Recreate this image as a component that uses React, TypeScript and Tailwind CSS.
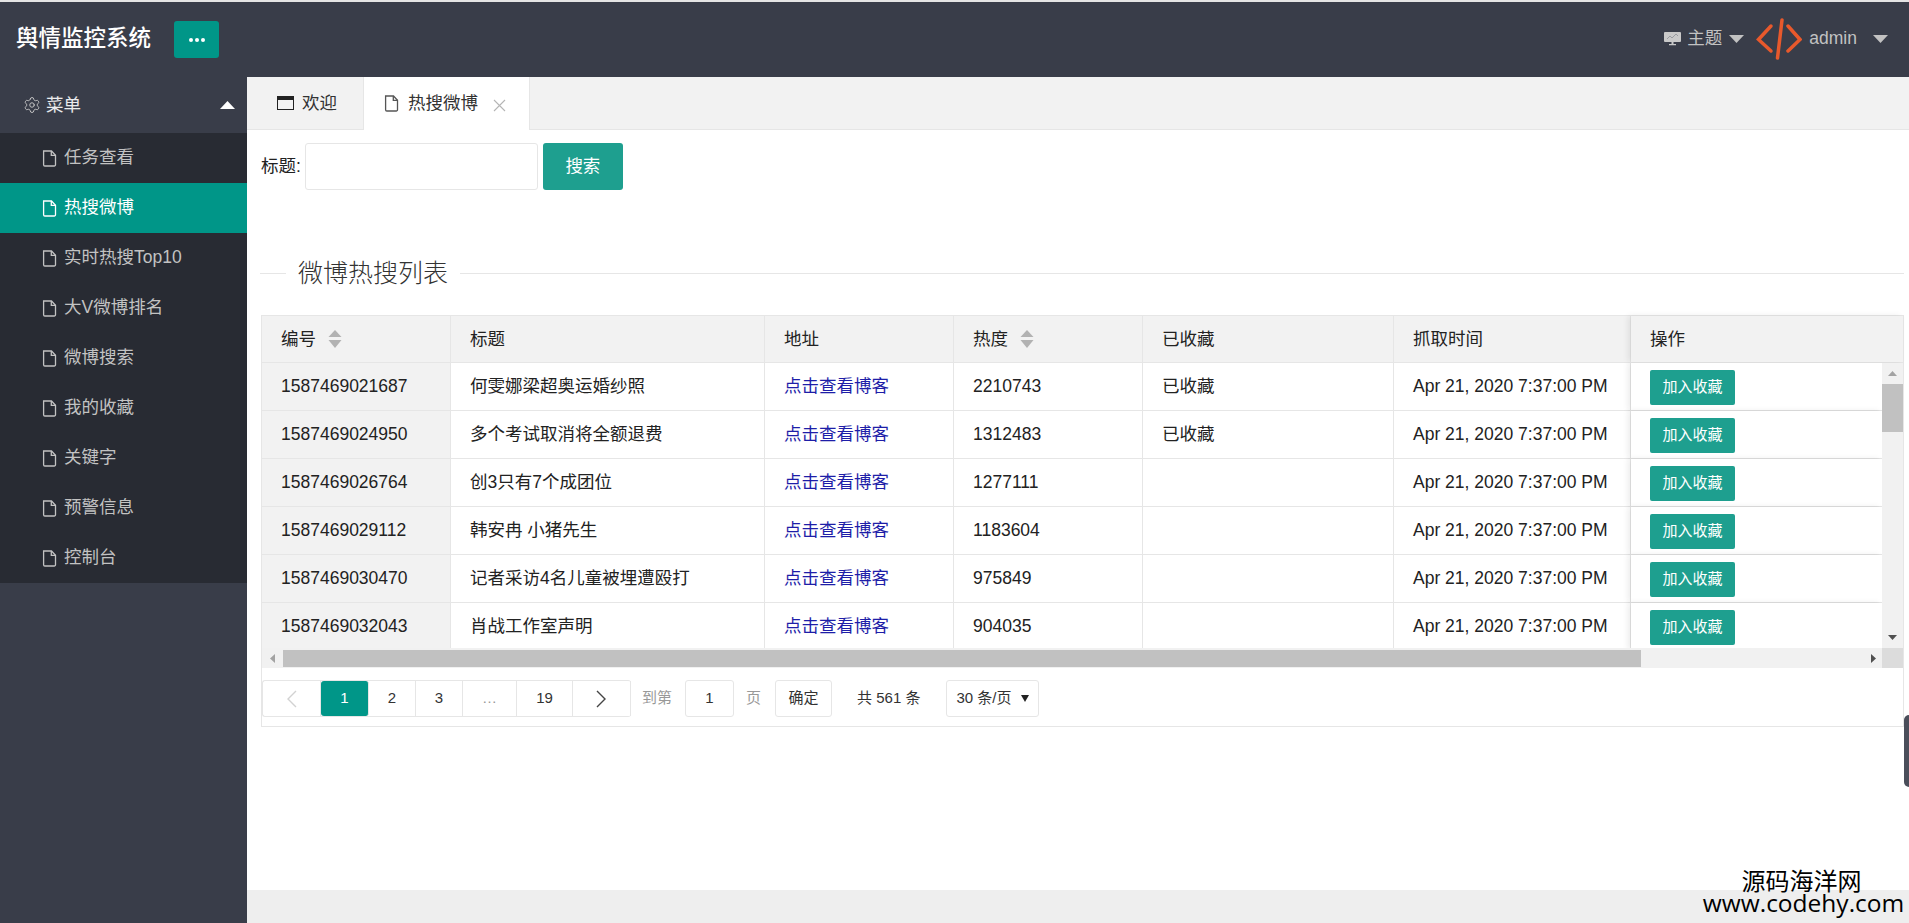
import React from "react";
import { Settings } from "lucide-react";

const menu = ["任务查看", "热搜微博", "实时热搜Top10", "大V微博排名", "微博搜索", "我的收藏", "关键字", "预警信息", "控制台"];

const rows = [
  ["1587469021687", "何雯娜梁超奥运婚纱照", "2210743", "已收藏"],
  ["1587469024950", "多个考试取消将全额退费", "1312483", "已收藏"],
  ["1587469026764", "创3只有7个成团位", "1277111", ""],
  ["1587469029112", "韩安冉 小猪先生", "1183604", ""],
  ["1587469030470", "记者采访4名儿童被埋遭殴打", "975849", ""],
  ["1587469032043", "肖战工作室声明", "904035", ""],
];

function Doc({ className }: { className: string }) {
  return (
    <svg width="15" height="17" viewBox="0 0 15 17" fill="none" stroke="currentColor" strokeWidth="1.3" className={className}>
      <path d="M1.6 1h7.9l4 4.2v9.6a1.2 1.2 0 0 1-1.2 1.2H2.8a1.2 1.2 0 0 1-1.2-1.2z" />
      <path d="M9.3 1v4.4h4.2" />
    </svg>
  );
}

function Caret({ up, className }: { up?: boolean; className: string }) {
  return (
    <svg width="15" height="8" viewBox="0 0 15 8" fill="currentColor" className={className}>
      <path d={up ? "M7.5 0L15 8H0z" : "M0 0h15L7.5 8z"} />
    </svg>
  );
}

function Sort() {
  return (
    <svg width="14" height="18" viewBox="0 0 14 18" fill="#b2b2b2" className="ml-[12px] shrink-0">
      <path d="M7 0l6.5 7H.5z" />
      <path d="M.5 10h13L7 18z" />
    </svg>
  );
}

function Th({ children, sort }: { children: string; sort?: boolean }) {
  return (
    <div className="flex items-center pl-[19px] border-r border-[#e6e6e6]">
      <span>{children}</span>
      {sort && <Sort />}
    </div>
  );
}

function Page({ children, w, active }: { children: React.ReactNode; w: string; active?: boolean }) {
  return (
    <div
      className={`${w} h-full flex items-center justify-center border-r border-[#e6e6e6] ${
        active ? "bg-[#009688] text-white rounded-[3px]" : ""
      }`}
    >
      {children}
    </div>
  );
}

export default function App() {
  return (
    <div className="relative w-full h-screen overflow-hidden flex flex-col bg-white text-[17.5px] text-[#222] font-['Liberation_Sans','Noto_Sans_CJK_SC',sans-serif]">
      <div className="h-[2px] bg-[#e4e4e4] shrink-0" />
      <header className="h-[75px] shrink-0 bg-[#393D49] flex items-center">
        <div className="ml-[16px] text-[22.5px] text-white font-medium w-[158px] -mt-[1px]">舆情监控系统</div>
        <button className="w-[45px] h-[37px] rounded-[3px] bg-[#009688] flex items-center justify-center gap-[2px]">
          <span className="w-[4px] h-[4px] rounded-full bg-white" />
          <span className="w-[4px] h-[4px] rounded-full bg-white" />
          <span className="w-[4px] h-[4px] rounded-full bg-white" />
        </button>
        <div className="ml-auto flex items-center text-[#c2c2c2] -mt-[3px]">
          <svg width="17" height="15" viewBox="0 0 17 15" className="mr-[6px]">
            <rect x="0" y="1" width="17" height="10" rx="1" fill="#c9c9c9" />
            <path d="M3 8l3-3 2 2 4-4 2 2" fill="none" stroke="#8d8f96" strokeWidth="0.8" />
            <path d="M7.5 11h2v2h2.5v1.2H5V13h2.5z" fill="#c9c9c9" />
          </svg>
          <span>主题</span>
          <Caret className="ml-[7px] mt-[2px] text-[#c2c2c2]" />
          <svg width="46" height="42" viewBox="0 0 46 42" fill="none" stroke="#e8592c" strokeWidth="3.5" strokeLinecap="round" className="ml-[12px] mt-[1px]">
            <path d="M15 8L2.5 21.5 15 33" />
            <path d="M32 8l12 13.5L32 33" />
            <path d="M26 2l-4.5 38" />
          </svg>
          <span className="ml-[7px]">admin</span>
          <Caret className="ml-[16px] mr-[21px] mt-[2px] text-[#c2c2c2]" />
        </div>
      </header>

      <div className="flex-1 flex min-h-0">
        <aside className="w-[247px] shrink-0 bg-[#393D49] text-[#c2c2c2]">
          <div className="h-[56px] flex items-center text-white/90">
            <Settings size={18} strokeWidth={1.25} className="ml-[23px] mr-[5px] text-[#c8c8c8]" />
            <span>菜单</span>
            <Caret up className="ml-auto mr-[12px] text-white" />
          </div>
          <div className="bg-[#282B33]">
            {menu.map((m, i) => (
              <div key={m} className={`h-[50px] flex items-center pl-[42px] ${i === 1 ? "bg-[#009688] text-white" : ""}`}>
                <Doc className="mr-[7px] shrink-0" />
                <span className="-mt-[1px]">{m}</span>
              </div>
            ))}
          </div>
        </aside>

        <main className="flex-1 min-w-0 flex flex-col">
          <div className="h-[53px] shrink-0 bg-[#f2f2f2] border-b border-[#e6e6e6] flex">
            <div className="w-[116px] flex items-center pl-[30px] text-[#333]">
              <svg width="17" height="14" viewBox="0 0 17 14" className="mr-[8px]">
                <rect x="0.5" y="0.5" width="16" height="13" fill="none" stroke="#222" />
                <rect x="0" y="0" width="17" height="4" fill="#222" />
              </svg>
              <span>欢迎</span>
            </div>
            <div className="w-[167px] h-[53px] bg-white border-x border-[#e6e6e6] flex items-center pl-[20px] text-[#333]">
              <Doc className="mr-[9px] text-[#555] shrink-0" />
              <span>热搜微博</span>
              <svg width="13" height="13" viewBox="0 0 13 13" stroke="#b5b5b5" strokeWidth="1.1" className="ml-[15px] mt-[3px]">
                <path d="M1 1l11 11M12 1L1 12" />
              </svg>
            </div>
          </div>

          <div className="flex-1 min-h-0 pl-[13px] pr-[5px] pt-[13px] bg-white">
            <div className="flex items-center h-[47px]">
              <span className="mr-[4px] ml-[1px] -mt-[1px]">标题:</span>
              <div className="w-[233px] h-[47px] border border-[#e6e6e6] rounded-[3px] bg-white" />
              <button className="ml-[5px] w-[80px] h-[47px] rounded-[3px] bg-[#1E9F8F] text-white">搜索</button>
            </div>

            <div className="mt-[70px] flex items-center h-[26px] text-[25px] font-light text-[#333]">
              <div className="w-[26px] h-px bg-[#e6e6e6]" />
              <span className="mx-[12px] mt-[2px]">微博热搜列表</span>
              <div className="flex-1 h-px bg-[#e6e6e6]" />
            </div>

            <div className="mt-[29px] ml-px h-[412px] border border-[#e6e6e6] flex flex-col">
              <div className="h-[47px] shrink-0 bg-[#f2f2f2] border-b border-[#e6e6e6] grid grid-cols-[189px_314px_189px_189px_251px_237px_1fr]">
                <Th sort>编号</Th>
                <Th>标题</Th>
                <Th>地址</Th>
                <Th sort>热度</Th>
                <Th>已收藏</Th>
                <Th>抓取时间</Th>
                <div className="flex items-center pl-[19px] shadow-[-3px_0_6px_rgba(0,0,0,0.08)]">操作</div>
              </div>

              <div className="h-[285px] shrink-0 flex overflow-hidden">
                <div className="flex-1 min-w-0">
                  {rows.map((r) => (
                    <div key={r[0]} className="h-[48px] border-b border-[#e6e6e6] grid grid-cols-[189px_314px_189px_189px_251px_237px_1fr]">
                      <div className="flex items-center pl-[19px] bg-[#f2f2f2] border-r border-[#e6e6e6]">{r[0]}</div>
                      <div className="flex items-center pl-[19px] border-r border-[#e6e6e6] whitespace-pre">{r[1]}</div>
                      <div className="flex items-center pl-[19px] border-r border-[#e6e6e6] text-[#1e1ea8]">点击查看博客</div>
                      <div className="flex items-center pl-[19px] border-r border-[#e6e6e6]">{r[2]}</div>
                      <div className="flex items-center pl-[19px] border-r border-[#e6e6e6]">{r[3]}</div>
                      <div className="flex items-center pl-[19px] border-r border-[#e6e6e6]">Apr 21, 2020 7:37:00 PM</div>
                      <div className="flex items-center pl-[19px] pt-[1px] bg-white shadow-[-3px_0_6px_rgba(0,0,0,0.08)]">
                        <button className="w-[85px] h-[35px] rounded-[2px] bg-[#1E9F8F] text-white text-[15px]">加入收藏</button>
                      </div>
                    </div>
                  ))}
                </div>
                <div className="w-[21px] shrink-0 bg-[#f1f1f1] flex flex-col items-center">
                  <div className="h-[21px] flex items-center justify-center">
                    <svg width="9" height="5" viewBox="0 0 9 5" fill="#a3a3a3"><path d="M4.5 0L9 5H0z" /></svg>
                  </div>
                  <div className="w-full h-[48px] bg-[#c1c1c1]" />
                  <div className="mt-auto h-[22px] flex items-center justify-center">
                    <svg width="9" height="5" viewBox="0 0 9 5" fill="#505050"><path d="M0 0h9L4.5 5z" /></svg>
                  </div>
                </div>
              </div>

              <div className="h-[20px] shrink-0 bg-[#f1f1f1] flex items-center">
                <div className="w-[21px] flex items-center justify-center">
                  <svg width="5" height="9" viewBox="0 0 5 9" fill="#a3a3a3"><path d="M5 0v9L0 4.5z" /></svg>
                </div>
                <div className="w-[1358px] h-[17px] bg-[#c1c1c1]" />
                <div className="flex-1 flex justify-end pr-[6px]">
                  <svg width="5" height="9" viewBox="0 0 5 9" fill="#505050"><path d="M0 0v9l5-4.5z" /></svg>
                </div>
                <div className="w-[21px] h-full bg-[#dcdcdc]" />
              </div>

              <div className="mt-[12px] h-[37px] flex items-center text-[15px] text-[#333]">
                <div className="h-full flex border-y border-l border-[#e6e6e6] rounded-[3px]">
                  <Page w="w-[58px]">
                    <svg width="11" height="18" viewBox="0 0 11 18" fill="none" stroke="#d2d2d2" strokeWidth="1.4"><path d="M10 1L2 9l8 8" /></svg>
                  </Page>
                  <Page w="w-[48px]" active>1</Page>
                  <Page w="w-[47px]">2</Page>
                  <Page w="w-[47px]">3</Page>
                  <Page w="w-[54px]"><span className="text-[#999]">…</span></Page>
                  <Page w="w-[56px]">19</Page>
                  <Page w="w-[58px]">
                    <svg width="11" height="18" viewBox="0 0 11 18" fill="none" stroke="#444" strokeWidth="1.4"><path d="M1 1l8 8-8 8" /></svg>
                  </Page>
                </div>
                <span className="ml-[11px] text-[#999]">到第</span>
                <div className="ml-[13px] w-[49px] h-full border border-[#e6e6e6] rounded-[3px] flex items-center justify-center">1</div>
                <span className="ml-[12px] text-[#999]">页</span>
                <div className="ml-[14px] w-[57px] h-full border border-[#e6e6e6] rounded-[3px] flex items-center justify-center">确定</div>
                <span className="ml-[25px] whitespace-pre">共 561 条</span>
                <div className="ml-[26px] w-[93px] h-full border border-[#e6e6e6] rounded-[3px] flex items-center justify-between pl-[9px] pr-[9px]">
                  <span className="whitespace-pre">30 条/页</span>
                  <svg width="8" height="7" viewBox="0 0 8 7" fill="#222"><path d="M0 0h8L4 7z" /></svg>
                </div>
              </div>
            </div>
          </div>

          <div className="h-[33px] shrink-0 bg-[#eeeeee]" />
        </main>
      </div>

      <div className="absolute right-0 top-[715px] w-[5px] h-[72px] rounded-l-[5px] bg-[#4a4e5a]" />
      <div className="absolute right-[3px] top-[866px] w-[205px] text-black leading-none text-center">
        <div className="text-[24px] leading-[28px] pr-[4px] font-['Noto_Sans_CJK_SC',sans-serif]">源码海洋网</div>
        <div className="text-[24.5px] leading-[18px] whitespace-nowrap font-['Open_Sans',sans-serif]">www.codehy.com</div>
      </div>
    </div>
  );
}
